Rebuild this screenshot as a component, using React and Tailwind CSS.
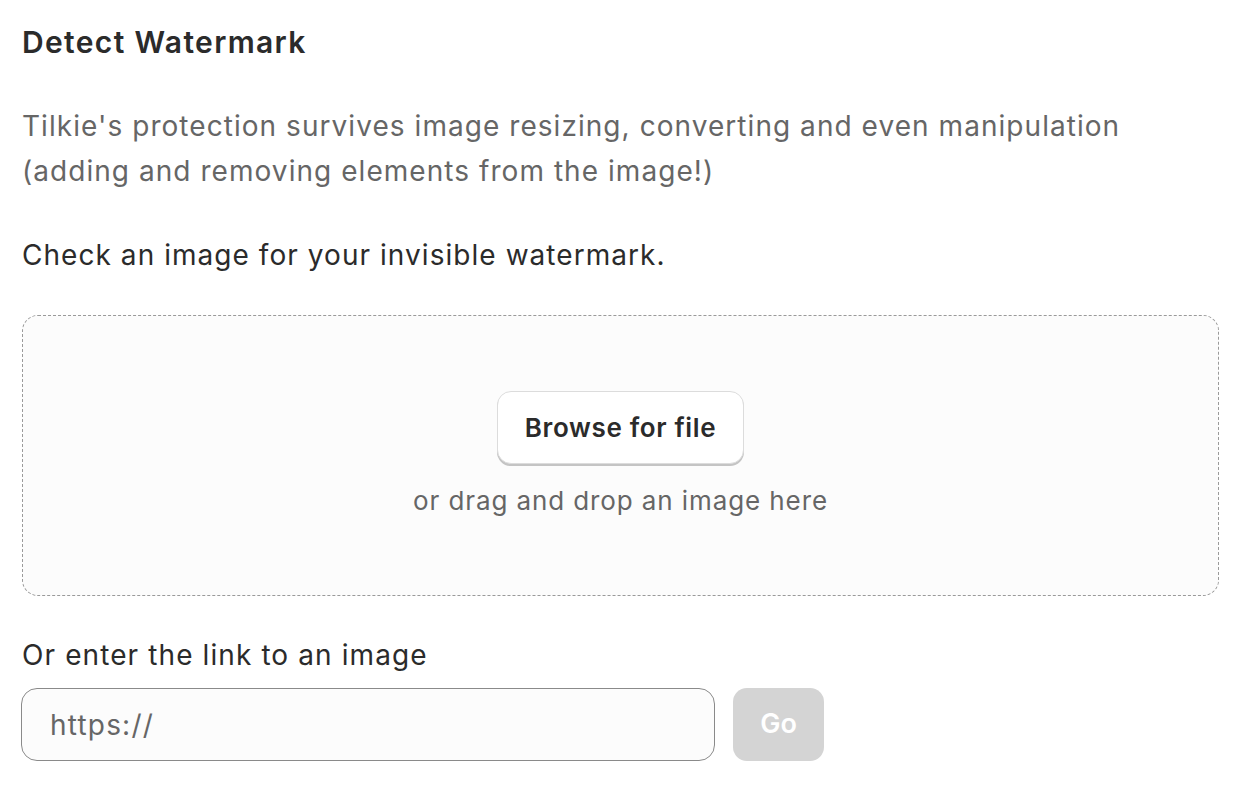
import React from "react";

const App = () => {
  return (
    <div
      className="min-h-screen bg-white px-[22px] pt-[24px] text-[#2b2b2b]"
      style={{ fontFamily: "Inter, 'Noto Sans', sans-serif" }}
    >
      <h1 className="text-[30px] leading-[36px] font-semibold tracking-[1.35px]">Detect Watermark</h1>

      <p className="mt-[44px] text-[28px] leading-[45px] tracking-[1.05px] text-[#666666]">
        Tilkie's protection survives image resizing, converting and even manipulation
        <br />
        (adding and removing elements from the image!)
      </p>

      <p className="mt-[43px] text-[28px] leading-[36px] tracking-[1.05px]">
        Check an image for your invisible watermark.
      </p>

      {/* drop zone */}
      <div className="mt-[42px] flex h-[281px] w-[1197px] flex-col items-center rounded-[16px] border border-dashed border-[#9a9a9a] bg-[#fcfcfc] pt-[75px]">
        <button className="h-[73px] w-[247px] rounded-[14px] border border-[#dcdcdc] bg-white text-[26px] font-semibold tracking-[0.65px] text-[#2b2b2b] shadow-[0_2px_0_#c4c4c4]">
          Browse for file
        </button>
        <span className="mt-[19px] text-[26px] leading-[36px] tracking-[0.9px] text-[#666666]">
          or drag and drop an image here
        </span>
      </div>

      <p className="mt-[41px] text-[28px] leading-[36px] tracking-[1.1px]">Or enter the link to an image</p>

      <div className="mt-[15px] flex items-center gap-[18px]">
        <input
          type="text"
          placeholder="https://"
          className="-ml-px h-[73px] w-[694px] rounded-[16px] border border-[#8a8a8a] bg-[#fcfcfc] px-[28px] text-[28px] tracking-[1.2px] text-[#2b2b2b] outline-none placeholder:text-[#666666]"
        />
        <button
          disabled
          className="h-[73px] w-[91px] rounded-[14px] bg-[#d4d4d4] text-[27px] font-semibold text-white"
        >
          Go
        </button>
      </div>
    </div>
  );
};

export default App;
